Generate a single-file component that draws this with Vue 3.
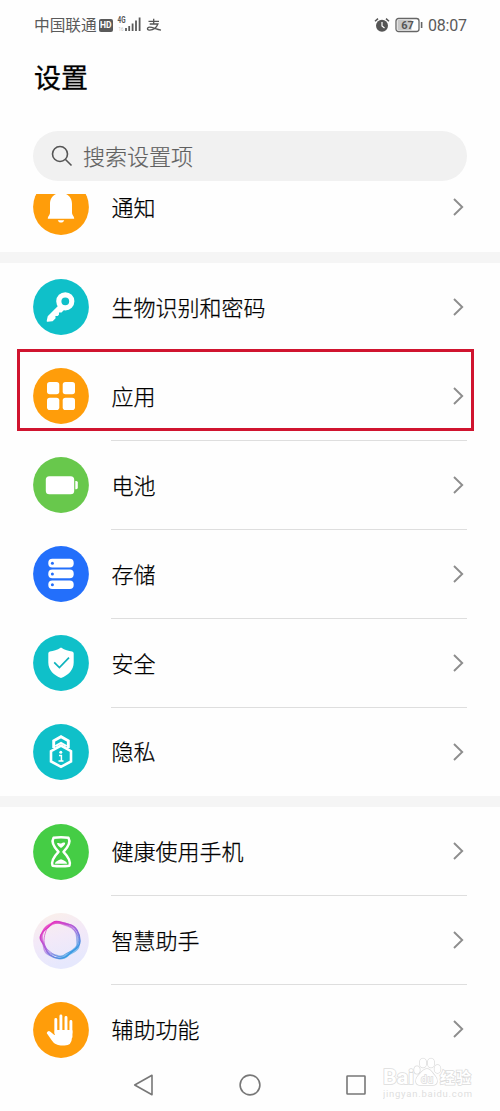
<script setup>
const groups = [
  { cls: 'first', rows: [{ icon: 'bell', label: '通知', color: '#ff9d0a' }] },
  {
    cls: 'second',
    rows: [
      { icon: 'key', label: '生物识别和密码', color: '#0fc0c9' },
      { icon: 'apps', label: '应用', color: '#ff9d0a', marked: true },
      { icon: 'battery', label: '电池', color: '#68c84c' },
      { icon: 'storage', label: '存储', color: '#236ffb' },
      { icon: 'shield', label: '安全', color: '#0fc0c9' },
      { icon: 'lock', label: '隐私', color: '#0fc0c9' },
    ],
  },
  {
    cls: 'third',
    rows: [
      { icon: 'hourglass', label: '健康使用手机', color: '#45cd45' },
      { icon: 'assistant', label: '智慧助手', color: 'url(#halo)' },
      { icon: 'hand', label: '辅助功能', color: '#ff9d0a' },
    ],
  },
]
</script>

<template>
  <div class="phone">
    <header>
      <div class="status">
        <span class="carrier">中国联通</span>
        <span class="hd">HD</span>
        <svg class="signal" width="26" height="18" viewBox="0 0 26 18">
          <text x="0.5" y="7" font-size="8.500" font-weight="bold" textLength="8" lengthAdjust="spacingAndGlyphs" fill="#555">4G</text>
          <text x="1.5" y="14.5" font-size="6" textLength="5" lengthAdjust="spacingAndGlyphs" fill="#bbb">16</text>
          <path d="M9 12v3M12.2 10v5M15.6 7.5v7.500M19 4.500v10.500M22.6 1.500v13.500" stroke="#5a5a5a" stroke-width="1.8" />
        </svg>
        <svg class="pay" width="16" height="14" viewBox="0 0 16 14" fill="none" stroke="#555" stroke-width="1.300">
          <path d="M2.500 3.300h10.500M7.700.8v5M3.700 6h8.200C10.500 9.500 7 12 3.700 12.200 1.500 12.300.9 10.800 1.900 9.700 4 7.800 8.500 10.800 15 12.200" />
        </svg>
        <span class="spacer"></span>
        <svg width="16" height="16" viewBox="0 0 16 16">
          <circle cx="8" cy="8.800" r="6" fill="#555" />
          <path d="M1 4.200 4 1.600M15 4.200 12 1.600" stroke="#555" stroke-width="1.500" />
          <path d="M8 5v4l2.500 2" fill="none" stroke="#fff" stroke-width="1.200" />
        </svg>
        <svg class="power" width="29" height="16" viewBox="0 0 29 16">
          <rect x="1" y="1.500" width="23" height="13" rx="2.500" fill="#fff" stroke="#666" stroke-width="1.300" />
          <rect x="2.500" y="3" width="14" height="10" fill="#c8c8c8" />
          <text x="12.500" y="12" text-anchor="middle" font-size="11" font-weight="bold" fill="#555">67</text>
          <path d="M26.600 5v6" stroke="#666" stroke-width="1.600" />
        </svg>
        <span class="clock">08:07</span>
      </div>
      <h1>设置</h1>
      <div class="search">
        <svg width="22" height="22" viewBox="0 0 22 22" fill="none" stroke="#555" stroke-width="1.600">
          <circle cx="9" cy="9" r="7.500" /><path d="m14.500 14.500 6 6" />
        </svg>
        <span>搜索设置项</span>
      </div>
    </header>

    <main>
      <section v-for="g in groups" :key="g.cls" :class="g.cls">
        <div v-for="r in g.rows" :key="r.icon" class="row" :class="{ marked: r.marked }">
          <svg class="icon" viewBox="0 0 56 56">
            <defs v-if="r.icon === 'assistant'">
              <linearGradient id="halo" x1="0" y1="0" x2=".3" y2="1"><stop stop-color="#fbf0e8" /><stop offset=".5" stop-color="#f3e9f8" /><stop offset="1" stop-color="#e6e8fd" /></linearGradient>
              <linearGradient id="swirl" x1=".1" y1=".1" x2=".75" y2=".95"><stop stop-color="#e82fbd" /><stop offset=".5" stop-color="#a761dc" /><stop offset="1" stop-color="#2b9fe3" /></linearGradient>
            </defs>
            <circle cx="28" cy="28" r="27.900" :fill="r.color" />
            <g v-if="r.icon === 'bell'" fill="#fff">
              <path d="M28 14c-7 0-11 4.800-11 11v8.500c0 3-2.200 3.400-2.200 6.300h26.400c0-2.900-2.200-3.300-2.200-6.300V25c0-6.200-4-11-11-11z" />
              <path d="M24.800 41.200h6.400c-.5 1.600-1.600 2.400-3.200 2.400s-2.700-.8-3.200-2.400z" />
            </g>
            <template v-else-if="r.icon === 'key'">
              <path d="M26.500 26.500 15.500 37.500l-1 4.500 4.800-.5 2.500-2.500-.3-2.800 2.800.1.900-.9-.1-3 3.100.2 3.700-3.600z" fill="#fff" stroke="#fff" stroke-width="1.600" stroke-linejoin="round" />
              <circle cx="32.300" cy="22.300" r="6.500" fill="none" stroke="#fff" stroke-width="5.200" />
            </template>
            <g v-else-if="r.icon === 'apps'" fill="#fff">
              <rect x="14" y="14" width="12.300" height="12.300" rx="2.800" /><rect x="29.700" y="14" width="12.300" height="12.300" rx="2.800" />
              <rect x="14" y="29.700" width="12.300" height="12.300" rx="2.800" /><rect x="29.700" y="29.700" width="12.300" height="12.300" rx="2.800" />
            </g>
            <g v-else-if="r.icon === 'battery'" fill="#fff">
              <rect x="12.800" y="19.200" width="28.400" height="18" rx="3.500" /><path d="M42.300 24h1q1.500 0 1.500 1.500v5q0 1.700-1.500 1.700h-1z" />
            </g>
            <template v-else-if="r.icon === 'storage'">
              <g v-for="y in [12.800, 23.600, 34.400]" :key="y">
                <rect x="15.300" :y="y" width="25.400" height="8.700" rx="4" fill="#fff" />
                <circle cx="19.400" :cy="y + 4.350" r="1.500" fill="#236ffb" />
              </g>
            </template>
            <template v-else-if="r.icon === 'shield'">
              <path d="M28 12.600c4 2.600 7.500 3.500 11.200 4q1.500.3 1.500 1.900v9c0 7.800-5.700 12.800-12.700 15.500-7-2.700-12.700-7.700-12.700-15.500v-9q0-1.600 1.500-1.900c3.700-.5 7.200-1.400 11.200-4z" fill="#fff" />
              <path d="m21.200 27.400 5.200 5.200 9.600-10" fill="none" stroke="#0fb4bd" stroke-width="1.700" />
            </template>
            <template v-else-if="r.icon === 'lock'">
              <path d="M20.700 24v-7.200L28 12.700l7.300 4.100V24" fill="none" stroke="#fff" stroke-width="2.900" />
              <path d="m22.300 22.100 5.700-3.300 5.700 3.300" fill="none" stroke="#fff" stroke-width="2" />
              <path d="m28 21.500 10 5.700v10.200l-10 5.400-10-5.400V27.200z" fill="#0fc0c9" stroke="#fff" stroke-width="2.600" />
              <circle cx="27.800" cy="28.200" r="1.500" fill="#fff" />
              <path d="M26 31.500h2.400v5.300M25.500 37h5" fill="none" stroke="#fff" stroke-width="1.500" />
            </template>
            <template v-else-if="r.icon === 'hourglass'">
              <path d="M20.500 13.800Q28 12.600 35.500 13.800C38 18 36 22 30.500 27.800 36 33.500 38 37.500 36.500 41.700Q28 42.700 19.500 41.700C18 37.500 20 33.500 25.500 27.800 20 22 18 18 20.500 13.800z" fill="none" stroke="#fff" stroke-width="2.500" stroke-linejoin="round" />
              <path d="M24 19.200c2-.8 2.700.9 4.200.2s2.300-1.500 4-.4c0 2-2.500 3.800-4.200 5-1.700-1.300-3.600-2.800-4-4.800z" fill="#fff" />
              <path d="M21.800 39.700c.7-2.500 3.500-3.300 6.200-4.400 2.700 1.100 5.500 1.900 6.200 4.400z" fill="#fff" />
            </template>
            <g v-else-if="r.icon === 'assistant'" fill="none" stroke="url(#swirl)">
              <path d="M20 9.500C24 6.500 29 10.500 36 11.500S47 21 47 28s-7 9-12 14-13 3.500-18 0-4-8-8-13 0-10 4-13 4-4 7-6.500z" stroke-width="1.500" />
              <path d="M22 9.500c6-1 15 1 20 6s4 11 4 17-8 7-12 11-13 2-19-2-3-7-6-14 4-17 13-18z" stroke-width="1.400" opacity=".6" />
              <path d="M20 11c5-3 9 0 15 2s9 6 9 12 2 8-4 12-8 8-15 6-10-2-13-9-4-9-2-15 6-6 10-8z" stroke-width="1.800" opacity=".6" />
              <path d="M24 10c8 1 14 2 18 8s5 9 2 15-8 5-13 9-10 0-16-5-4-14-2-19 4-8 11-8z" stroke-width="1" opacity=".7" />
            </g>
            <g v-else-if="r.icon === 'hand'" fill="none" stroke="#fff" stroke-width="2.900" stroke-linecap="round" stroke-linejoin="round">
              <path d="M22.800 31V17.500M27.900 31V14M33 31V15.500M37.900 31V19.500" />
              <path d="m14.800 31 4.700 6.700c2 3 4 4.700 8.200 4.700h3.800c4.500 0 6.400-3 6.400-6.400V29H22.800v6.500l-6-5q-1.500-1-2 .5z" fill="#fff" stroke-width="2" />
              <path d="M38.200 29v6" stroke-width="2.500" />
            </g>
          </svg>
          <div class="body">
            <span>{{ r.label }}</span>
            <svg class="chevron" width="11" height="18" viewBox="0 0 11 18"><path d="m1 1 8.200 8L1 17" fill="none" stroke="#8d8d8d" stroke-width="1.900" /></svg>
          </div>
        </div>
      </section>
    </main>

    <nav>
      <svg viewBox="0 0 22 22"><path d="M19 1.300v19.400L1.700 11z" /></svg>
      <svg viewBox="0 0 22 22"><circle cx="11" cy="11" r="9.900" /></svg>
      <svg viewBox="0 0 22 22"><rect x="2" y="2" width="18" height="18" rx=".5" /></svg>
    </nav>
    <svg class="watermark" width="95" height="46" viewBox="0 0 95 46">
      <g fill="#fff" stroke="#dcdcdc" stroke-width="1.500" paint-order="stroke">
        <text x="0" y="28" font-size="20" font-weight="bold" textLength="31" lengthAdjust="spacingAndGlyphs">Bai</text>
        <ellipse cx="34" cy="14" rx="2.800" ry="3.800" /><ellipse cx="40" cy="7" rx="3.300" ry="4.500" /><ellipse cx="48" cy="7" rx="3.300" ry="4.500" /><ellipse cx="54.500" cy="13" rx="3" ry="4" />
        <path d="M44 13c4 0 5 4 8 7s3 9-2 9H37c-5 0-5-6-2-9s5-7 9-7z" />
        <text x="38" y="27" font-size="10" textLength="12">du</text>
        <text x="57" y="27" font-size="15" font-weight="bold" textLength="31">经验</text>
      </g>
      <text x="0" y="41" font-size="9.500" textLength="89" fill="#dedede">jingyan.baidu.com</text>
    </svg>
  </div>
</template>

<style>
body { margin: 0; background: #fff; }
</style>
<style scoped>
.phone { position: relative; display: flex; flex-direction: column; width: 500px; height: 1111px; overflow: hidden; background: #fefefe; color: #000; font-family: Roboto, "Noto Sans CJK SC", sans-serif; }
header { height: 194px; box-sizing: border-box; padding: 14px 33px 0; flex: none; }
.status { display: flex; align-items: center; height: 22px; color: #5a5a5a; }
.carrier { font-size: 15.700px; line-height: 22px; margin-left: 1px; padding-top: 1px; }
.hd { margin-left: 2px; width: 14px; height: 13px; border-radius: 2px; background: #5a5a5a; color: #fff; font-size: 8.500px; line-height: 13px; font-weight: bold; text-align: center; }
.signal { margin-left: 4px; }
.pay { margin-left: 3px; }
.spacer { flex: 1; }
.power { margin-left: 5px; }
.clock { width: 39px; margin-left: 4px; font-size: 16px; letter-spacing: -.2px; white-space: nowrap; }
h1 { margin: 23px 0 0 1px; font-size: 27px; line-height: 40px; font-weight: 400; -webkit-text-stroke: .3px #000; }
.search { margin-top: 32px; height: 50px; border-radius: 25px; background: #f1f1f1; display: flex; align-items: center; color: #606060; font-size: 22px; font-weight: 300; -webkit-text-stroke: .2px #606060; }
.search svg { margin: 0 10px 0 18px; }
.search span { padding-bottom: 3px; }
main { flex: none; height: 869px; overflow: hidden; }
.first { margin-top: -31px; }
section { border-bottom: 11px solid #f5f5f5; }
.third { border-bottom: 0; }
.row { position: relative; display: flex; align-items: center; height: 89px; padding: 0 33px; }
.second .row:last-child { height: 88px; }
.icon { width: 56px; height: 56px; flex: none; }
.first .icon, .second .row:not(:last-child) .icon { margin-bottom: 1px; }
.body { flex: 1; height: 100%; box-sizing: border-box; margin-left: 22px; display: flex; align-items: center; justify-content: space-between; border-bottom: 1px solid #dedede; font-size: 22px; font-weight: 300; -webkit-text-stroke: .25px #000; padding: 1px 3px 0 0; }
.row:last-child .body { border-bottom-color: transparent; }
.body span { padding: 0 0 4px .5px; }
.chevron { margin-bottom: 1px; }
.marked::after { content: ""; position: absolute; left: 17px; top: -3px; width: 457px; height: 82px; box-sizing: border-box; border: 3px solid #d0142f; }
nav { height: 48px; display: flex; justify-content: space-between; align-items: center; padding: 0 133px; margin-top: -2px; }
nav svg { width: 22px; height: 22px; fill: none; stroke: #777; stroke-width: 1.600; stroke-linejoin: round; }
.watermark { position: absolute; left: 383px; top: 1056px; }
</style>
